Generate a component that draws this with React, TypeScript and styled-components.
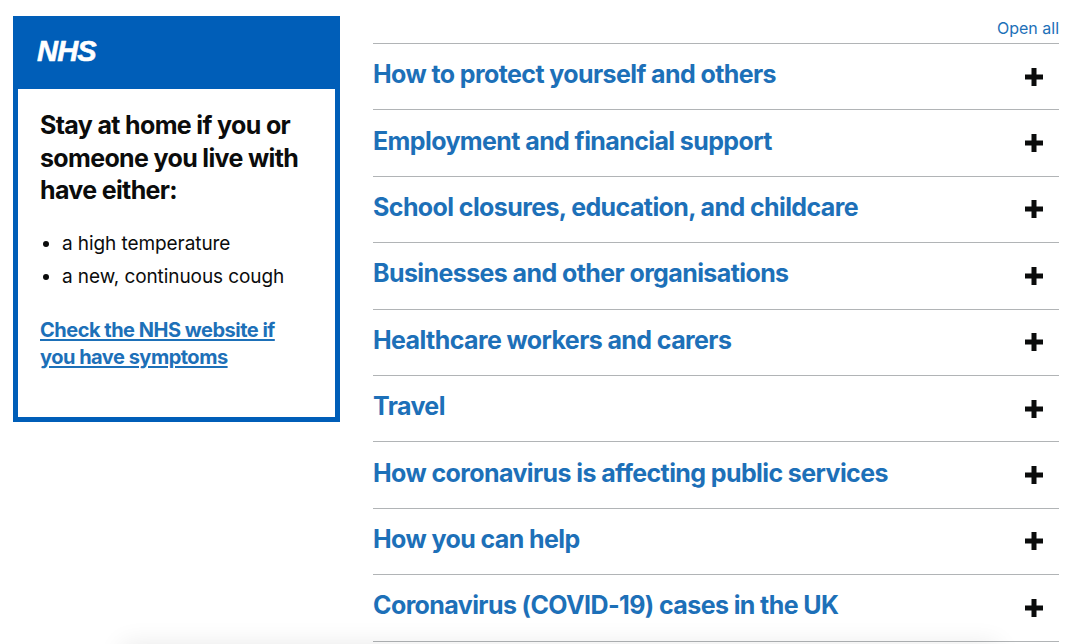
import React from "react";
import styled, { createGlobalStyle } from "styled-components";

const Global = createGlobalStyle`
  html, body { margin: 0; padding: 0; background: #fff; }
  body { font-family: "Inter", "Liberation Sans", sans-serif; color: #0b0c0c; }
`;

const Page = styled.div`
  position: relative;
  width: 1080px;
  height: 644px;
  overflow: hidden;
  display: flex;
  align-items: flex-start;
  gap: 33px;
  padding: 16px 21px 0 13px;
  box-sizing: border-box;
`;

const Notice = styled.aside`
  width: 327px;
  height: 406px;
  flex: none;
  box-sizing: border-box;
  border: 5px solid #005eb8;
  border-top: none;
  display: flex;
  flex-direction: column;
`;

const NoticeHeader = styled.div`
  height: 73px;
  margin: 0 -5px;
  background: #005eb8;
  padding: 19px 0 0 24px;
  box-sizing: border-box;
  flex: none;
`;

const Logo = styled.span`
  display: block;
  font-family: "Liberation Sans", sans-serif;
  font-weight: 700;
  font-style: italic;
  font-size: 29px;
  line-height: 32px;
  letter-spacing: -0.8px;
  color: #fff;
  -webkit-text-stroke: 0.6px #fff;
`;

const NoticeBody = styled.div`
  padding: 20px 22px 0;
`;

const NoticeTitle = styled.h2`
  margin: 0;
  font-size: 25px;
  line-height: 32.5px;
  font-weight: 700;
  letter-spacing: -0.65px;
  color: #0b0c0c;
`;

const Symptoms = styled.ul`
  margin: 20px 0 0;
  padding: 0 0 0 22px;
  font-size: 19px;
  line-height: 33px;
  letter-spacing: -0.08px;
`;

const NoticeLink = styled.a`
  display: block;
  margin-top: 24px;
  font-size: 20px;
  line-height: 27px;
  font-weight: 700;
  letter-spacing: -0.5px;
  color: #1d70b8;
  text-decoration: underline;
  text-underline-offset: 2px;
`;

const Accordion = styled.section`
  flex: 1;
  display: flex;
  flex-direction: column;
`;

const Controls = styled.div`
  height: 27px;
  display: flex;
  justify-content: flex-end;
  align-items: flex-start;
`;

const OpenAll = styled.a`
  font-size: 16px;
  line-height: 24px;
  color: #1d70b8;
`;

const List = styled.div`
  border-top: 1px solid #b1b4b6;
`;

const Row = styled.div`
  height: 66.4px;
  box-sizing: border-box;
  border-bottom: 1px solid #b1b4b6;
  display: flex;
  align-items: center;
  justify-content: space-between;
  padding-right: 16px;
`;

const RowTitle = styled.a`
  font-size: 25px;
  line-height: 30px;
  font-weight: 700;
  letter-spacing: -0.6px;
  color: #1d70b8;
  margin-top: -5px;
`;

const Plus = styled.svg`
  width: 18px;
  height: 18px;
  flex: none;
  fill: #0b0c0c;
`;

const BottomShade = styled.div`
  position: absolute;
  left: 130px;
  right: 90px;
  top: 652px;
  height: 20px;
  box-shadow: 0 0 26px 8px rgba(0, 0, 0, 0.09);
`;

const topics = [
  "How to protect yourself and others",
  "Employment and financial support",
  "School closures, education, and childcare",
  "Businesses and other organisations",
  "Healthcare workers and carers",
  "Travel",
  "How coronavirus is affecting public services",
  "How you can help",
  "Coronavirus (COVID-19) cases in the UK",
];

export default function App() {
  return (
    <Page>
      <Global />
      <Notice>
        <NoticeHeader>
          <Logo>NHS</Logo>
        </NoticeHeader>
        <NoticeBody>
          <NoticeTitle>
            Stay at home if you or
            <br />
            someone you live with
            <br />
            have either:
          </NoticeTitle>
          <Symptoms>
            <li>a high temperature</li>
            <li>a new, continuous cough</li>
          </Symptoms>
          <NoticeLink href="#">
            Check the NHS website if
            <br />
            you have symptoms
          </NoticeLink>
        </NoticeBody>
      </Notice>
      <Accordion>
        <Controls>
          <OpenAll>Open all</OpenAll>
        </Controls>
        <List>
          {topics.map((t) => (
            <Row key={t}>
              <RowTitle>{t}</RowTitle>
              <Plus viewBox="0 0 18 18" aria-hidden="true">
                <path d="M6.5 0h5v6.5H18v5h-6.5V18h-5v-6.5H0v-5h6.5z" />
              </Plus>
            </Row>
          ))}
        </List>
      </Accordion>
      <BottomShade />
    </Page>
  );
}
